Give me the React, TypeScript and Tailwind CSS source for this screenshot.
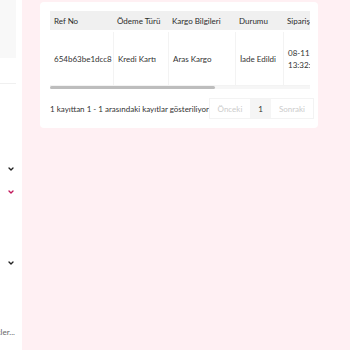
import { ChevronDown } from "lucide-react";

const cols = [
  { label: "Ref No", value: "654b63be1dcc8", w: "w-[63px]" },
  { label: "Ödeme Türü", value: "Kredi Kartı", w: "w-[55px]" },
  { label: "Kargo Bilgileri", value: "Aras Kargo", w: "w-[67px]" },
  { label: "Durumu", value: "İade Edildi", w: "w-[48px]" },
  { label: "Sipariş Tarihi", value: "08-11-2023 13:32:11", w: "w-[60px]" },
];

export default function App() {
  return (
    <div className="flex h-[350px] w-[350px] overflow-hidden bg-[#fff0f3] font-['Lato',sans-serif]">
      <aside className="flex w-[22px] shrink-0 flex-col bg-white">
        <div className="h-[58px] w-[16px] bg-[#f8f8f8]" />
        <div className="mt-[25px] h-px w-[16px] bg-[#f0f0f0]" />
        <div className="mt-[81px] flex h-[8px] justify-end pr-[7px] text-[#222]">
          <ChevronDown size={8} strokeWidth={4} />
        </div>
        <div className="mt-[15px] flex h-[8px] justify-end pr-[7px] text-[#c2185b]">
          <ChevronDown size={8} strokeWidth={4} />
        </div>
        <div className="mt-[63px] flex h-[8px] justify-end pr-[7px] text-[#222]">
          <ChevronDown size={8} strokeWidth={4} />
        </div>
        <div className="mt-[59px] flex justify-end overflow-hidden whitespace-nowrap pr-[7px] text-[8px] text-[#666]">
          <span>Destekler...</span>
        </div>
      </aside>

      <main className="flex-1 pl-[18px] pt-[2px]">
        <div className="w-[278px] rounded-sm bg-white px-[10px] pb-[9px] pt-[9px]">
          <div className="w-[260px] overflow-hidden">
            <div className="flex h-[19px] w-max bg-[#f0f0f0] text-[8px] text-[#2b2b2b]">
              {cols.map((c) => (
                <div key={c.label} className={`${c.w} flex shrink-0 items-center whitespace-nowrap pl-[4px]`}>
                  {c.label}
                </div>
              ))}
            </div>
            <div className="flex h-[56px] w-max border-b border-[#f3f3f3] pt-[2px] text-[8px] text-[#333]">
              {cols.map((c, i) => (
                <div
                  key={c.label}
                  className={`${c.w} flex shrink-0 items-center pl-[4px] leading-[12px] ${i > 0 ? "border-l border-[#f3f3f3]" : ""}`}
                >
                  {c.value}
                </div>
              ))}
            </div>
            <div className="h-[3px] w-[260px] bg-[#f6f6f6]">
              <div className="h-[3px] w-[165px] rounded-full bg-[#bdbdbd]" />
            </div>
          </div>

          <div className="mt-[9px] flex h-[21px] items-center justify-between">
            <span className="whitespace-nowrap text-[8px] text-[#333]">
              1 kayıttan 1 - 1 arasındaki kayıtlar gösteriliyor
            </span>
            <div className="flex h-[21px] border border-[#f3f3f3] text-[8px]">
              <div className="flex w-[40px] items-center justify-center text-[#ccc]">Önceki</div>
              <div className="flex w-[21px] items-center justify-center bg-[#f5f5f5] text-[#333]">1</div>
              <div className="flex w-[42px] items-center justify-center text-[#ccc]">Sonraki</div>
            </div>
          </div>
        </div>
      </main>
    </div>
  );
}
